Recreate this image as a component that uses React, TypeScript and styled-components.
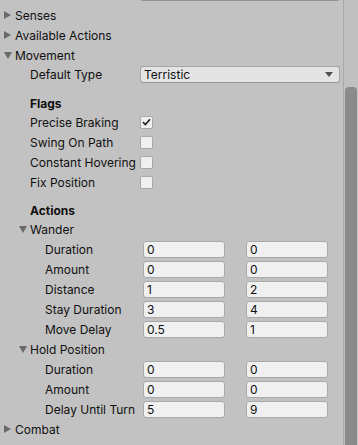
import React from "react";
import styled, { createGlobalStyle } from "styled-components";

const GlobalStyle = createGlobalStyle`
  html, body {
    margin: 0;
    padding: 0;
    background: #c2c2c2;
  }
  body {
    font-family: Inter, "Noto Sans", "Liberation Sans", sans-serif;
    font-size: 12px;
    color: #101010;
  }
`;

const Window = styled.div`
  width: 358px;
  height: 445px;
  display: flex;
  overflow: hidden;
  background: #c2c2c2;
`;

const Panel = styled.div`
  flex: 1;
  overflow: hidden;
`;

const Scrolled = styled.div`
  margin-top: -20px;
`;

const ScrollTrack = styled.div`
  width: 12px;
  border-left: 1px solid #a9a9a9;
  background: #c0c0c0;
  display: flex;
  flex-direction: column;
  padding: 87px 1px 0 1px;
`;

const Thumb = styled.div`
  flex: 1;
  background: #8b8b8b;
  border-radius: 4px 4px 0 0;
`;

const Row = styled.div<{ $indent?: number; $h?: number }>`
  height: ${(p) => p.$h ?? 20}px;
  display: flex;
  align-items: center;
  padding-left: ${(p) => p.$indent ?? 0}px;
  white-space: nowrap;
`;

const Spacer = styled.div<{ $h: number }>`
  height: ${(p) => p.$h}px;
`;

const Arrow = styled.span<{ $open?: boolean }>`
  width: 8px;
  height: 10px;
  display: inline-flex;
  align-items: center;
  justify-content: flex-start;
  margin-right: 3px;
  &::before {
    content: "";
    display: block;
    ${(p) =>
      p.$open
        ? `border-left: 4px solid transparent;
           border-right: 4px solid transparent;
           border-top: 7px solid #6a6a6a;`
        : `border-top: 4px solid transparent;
           border-bottom: 4px solid transparent;
           border-left: 7px solid #6a6a6a;`}
  }
`;

const Label = styled.span<{ $w: number }>`
  width: ${(p) => p.$w}px;
  flex-shrink: 0;
`;

const Header = styled.div`
  height: 18px;
  display: flex;
  align-items: center;
  padding-left: 30px;
  font-weight: 700;
`;

const Dropdown = styled.div`
  width: 200px;
  height: 17px;
  box-sizing: border-box;
  background: #e4e4e4;
  border: 1px solid #a5a5a5;
  border-bottom-color: #939393;
  border-radius: 3px;
  display: flex;
  align-items: center;
  justify-content: space-between;
  padding: 0 6px 0 3px;
  &::after {
    content: "";
    border-left: 4px solid transparent;
    border-right: 4px solid transparent;
    border-top: 5px solid #505050;
  }
`;

const Check = styled.span`
  width: 13px;
  height: 13px;
  box-sizing: border-box;
  background: #f0f0f0;
  border: 1px solid #a7a7a7;
  border-radius: 2px;
  display: inline-flex;
  align-items: center;
  justify-content: center;
`;

const Fields = styled.div`
  display: flex;
  gap: 21px;
`;

const Field = styled.div`
  width: 82px;
  height: 17px;
  box-sizing: border-box;
  background: #f0f0f0;
  border: 1px solid #a9a9a9;
  border-radius: 3px;
  padding-left: 3px;
  display: flex;
  align-items: center;
`;

const Foldout = ({ title, open, indent = 4 }: { title: string; open?: boolean; indent?: number }) => (
  <Row $indent={indent}>
    <Arrow $open={open} />
    {title}
  </Row>
);

const Flag = ({ label, on }: { label: string; on?: boolean }) => (
  <Row $indent={30}>
    <Label $w={110}>{label}</Label>
    <Check>
      {on && (
        <svg width="9" height="8" viewBox="0 0 9 8">
          <path d="M1 4.2 L3.4 6.5 L8 1.2" fill="none" stroke="#222" strokeWidth="1.6" />
        </svg>
      )}
    </Check>
  </Row>
);

const Pair = ({ label, a, b }: { label: string; a: string; b: string }) => (
  <Row $indent={45}>
    <Label $w={98}>{label}</Label>
    <Fields>
      <Field>{a}</Field>
      <Field>{b}</Field>
    </Fields>
  </Row>
);

export default function App() {
  return (
    <>
      <GlobalStyle />
      <Window>
        <Panel>
          <Scrolled>
            <Row $indent={15} $h={25}>
              <Label $w={125}>Steering</Label>
              <Dropdown />
            </Row>
            <Foldout title="Senses" />
            <Foldout title="Available Actions" />
            <Foldout title="Movement" open />
            <Row $indent={30} $h={19}>
              <Label $w={110}>Default Type</Label>
              <Dropdown>Terristic</Dropdown>
            </Row>
            <Spacer $h={10} />
            <Header>Flags</Header>
            <Flag label="Precise Braking" on />
            <Flag label="Swing On Path" />
            <Flag label="Constant Hovering" />
            <Flag label="Fix Position" />
            <Spacer $h={9} />
            <Header>Actions</Header>
            <Foldout title="Wander" open indent={19} />
            <Pair label="Duration" a="0" b="0" />
            <Pair label="Amount" a="0" b="0" />
            <Pair label="Distance" a="1" b="2" />
            <Pair label="Stay Duration" a="3" b="4" />
            <Pair label="Move Delay" a="0.5" b="1" />
            <Foldout title="Hold Position" open indent={19} />
            <Pair label="Duration" a="0" b="0" />
            <Pair label="Amount" a="0" b="0" />
            <Pair label="Delay Until Turn" a="5" b="9" />
            <Foldout title="Combat" />
          </Scrolled>
        </Panel>
        <ScrollTrack>
          <Thumb />
        </ScrollTrack>
      </Window>
    </>
  );
}
